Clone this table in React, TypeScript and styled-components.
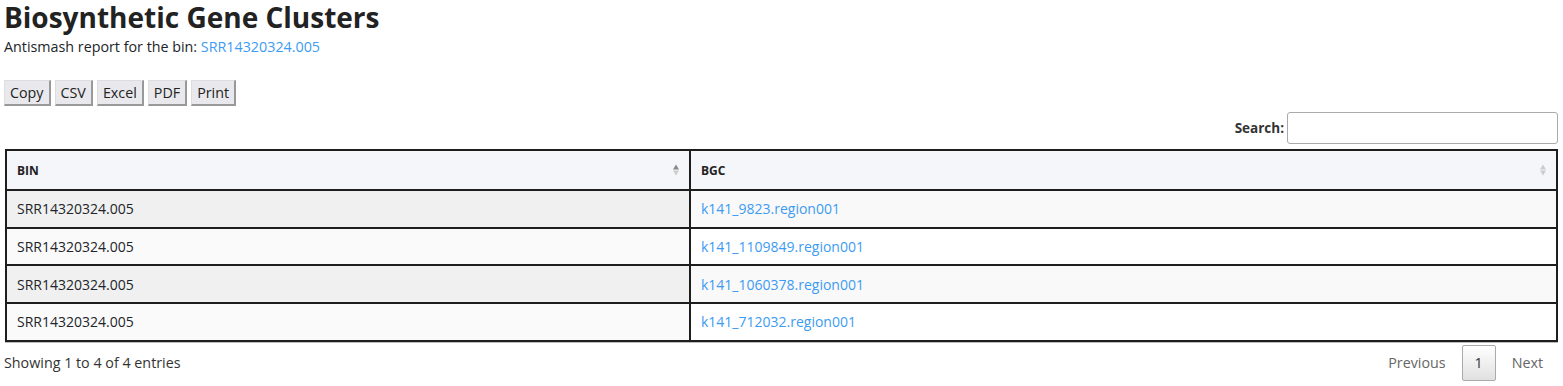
import React from "react";
import styled, { createGlobalStyle } from "styled-components";

const Global = createGlobalStyle`
  html, body { margin: 0; padding: 0; background: #fff; }
  body { font-family: "Open Sans", "Liberation Sans", sans-serif; color: #212529; }
`;

const Page = styled.div`
  padding: 0 5px 0 4px;
  display: flex;
  flex-direction: column;
`;

const Title = styled.h1`
  margin: 0;
  font-size: 28px;
  line-height: 34px;
  font-weight: 700;
  color: #222;
`;

const Subtitle = styled.p`
  margin: 3px 0 0 0;
  font-size: 14.3px;
  line-height: 20px;
  color: #212529;
`;

const Link = styled.a`
  color: #3d9bf2;
  text-decoration: none;
`;

const Toolbar = styled.div`
  display: flex;
  gap: 4px;
  margin-top: 23px;
`;

const ExportButton = styled.button`
  font-family: inherit;
  font-size: 14.3px;
  height: 26px;
  padding: 0 5px;
  color: #222;
  background: #e9e9ed;
  border-width: 1px 2px 2px 1px;
  border-color: #ddd #999 #999 #ddd;
  border-style: solid;
`;

const SearchRow = styled.div`
  display: flex;
  justify-content: flex-end;
  align-items: center;
  gap: 3px;
  margin-top: 6px;
  font-size: 13.5px;
  font-weight: 700;
  color: #333;
`;

const SearchInput = styled.input`
  width: 271px;
  height: 32px;
  box-sizing: border-box;
  border: 1px solid #aaa;
  border-radius: 3px;
  padding: 0 2px;
`;

const Table = styled.table`
  margin-top: 5px;
  margin-left: 1px;
  border-collapse: collapse;
  width: calc(100% - 1px);
  font-size: 14px;
  border: 2px solid #1e1e1e;
  box-shadow: 0 1px 0 #bbb;
`;

const HeadCell = styled.th<{ $w?: string }>`
  position: relative;
  text-align: left;
  font-size: 12px;
  font-weight: 700;
  color: #222;
  background: #f5f6fa;
  height: 38px;
  padding: 0 10px;
  border-bottom: 1px solid #aaa;
  border-left: 2px solid #1e1e1e;
  ${(p) => (p.$w ? `width: ${p.$w};` : "")}
  &:first-child { border-left: none; }
`;

const SortIcon = styled.span<{ $active?: boolean }>`
  position: absolute;
  right: 10px;
  top: 50%;
  transform: translateY(-50%);
  display: flex;
  flex-direction: column;
  gap: 1px;
  &::before, &::after {
    content: "";
    display: block;
    border-left: 3.5px solid transparent;
    border-right: 3.5px solid transparent;
  }
  &::before { border-bottom: 5px solid ${(p) => (p.$active ? "#888" : "#ccc")}; }
  &::after { border-top: 5px solid #ccc; }
`;

const Row = styled.tr<{ $odd: boolean }>`
  background: ${(p) => (p.$odd ? "#f9f9f9" : "#fff")};
  border-top: 2px solid #1e1e1e;
  & > td:first-child {
    background: ${(p) => (p.$odd ? "#f0f0f0" : "#fafafa")};
  }
`;

const Cell = styled.td`
  height: 35.7px;
  padding: 0 10px;
  color: #212529;
  border-left: 2px solid #1e1e1e;
  &:first-child { border-left: none; }
`;

const Footer = styled.div`
  display: flex;
  justify-content: space-between;
  align-items: center;
  margin-top: 3px;
  font-size: 14.3px;
`;

const Info = styled.div`
  color: #333;
`;

const Pager = styled.div`
  display: flex;
  align-items: center;
  gap: 16px;
  padding-right: 15px;
`;

const PageLink = styled.span<{ $current?: boolean }>`
  display: inline-flex;
  align-items: center;
  justify-content: center;
  height: 36px;
  box-sizing: border-box;
  color: ${(p) => (p.$current ? "#333" : "#666")};
  ${(p) =>
    p.$current
      ? `width: 34px; border: 1px solid #aaa; border-radius: 2px; background: linear-gradient(#fff, #e0e0e0);`
      : ""}
`;

const rows = [
  ["SRR14320324.005", "k141_9823.region001"],
  ["SRR14320324.005", "k141_1109849.region001"],
  ["SRR14320324.005", "k141_1060378.region001"],
  ["SRR14320324.005", "k141_712032.region001"],
];

export default function App() {
  return (
    <>
      <Global />
      <Page>
        <Title>Biosynthetic Gene Clusters</Title>
        <Subtitle>
          Antismash report for the bin: <Link href="#">SRR14320324.005</Link>
        </Subtitle>
        <Toolbar>
          {["Copy", "CSV", "Excel", "PDF", "Print"].map((b) => (
            <ExportButton key={b}>{b}</ExportButton>
          ))}
        </Toolbar>
        <SearchRow>
          <label>Search:</label>
          <SearchInput type="search" />
        </SearchRow>
        <Table>
          <thead>
            <tr>
              <HeadCell $w="662px">
                BIN
                <SortIcon $active />
              </HeadCell>
              <HeadCell>
                BGC
                <SortIcon />
              </HeadCell>
            </tr>
          </thead>
          <tbody>
            {rows.map((r, i) => (
              <Row key={i} $odd={i % 2 === 0}>
                <Cell>{r[0]}</Cell>
                <Cell>
                  <Link href="#">{r[1]}</Link>
                </Cell>
              </Row>
            ))}
          </tbody>
        </Table>
        <Footer>
          <Info>Showing 1 to 4 of 4 entries</Info>
          <Pager>
            <PageLink>Previous</PageLink>
            <PageLink $current>1</PageLink>
            <PageLink>Next</PageLink>
          </Pager>
        </Footer>
      </Page>
    </>
  );
}
